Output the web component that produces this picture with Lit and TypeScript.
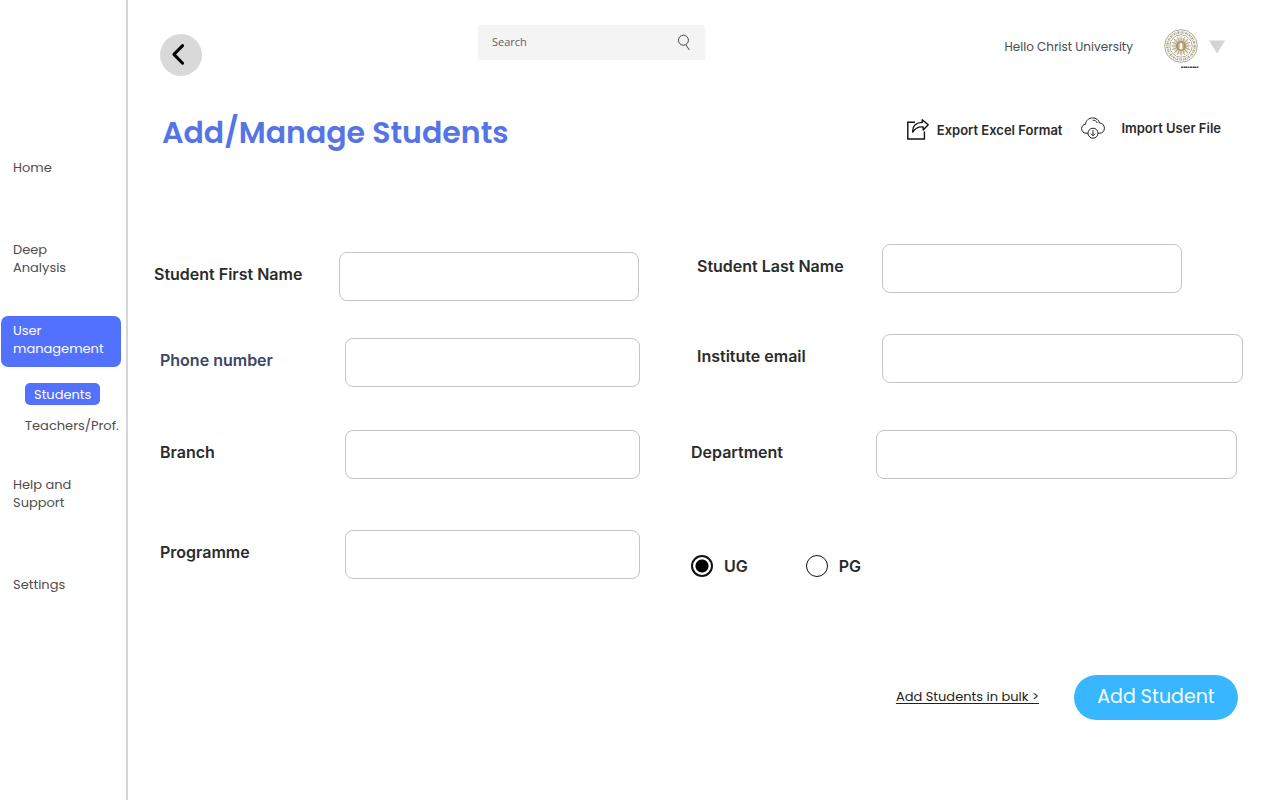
import { LitElement, html, css, svg } from "lit";
import { customElement, state } from "lit/decorators.js";

const RAYS = Array.from({ length: 16 }, (_, i) => i * 22.5);

@customElement("university-seal")
class UniversitySeal extends LitElement {
  static styles = css`
    :host { display: block; width: 36px; height: 40px; }
    svg { display: block; }
  `;
  render() {
    return html`
      <svg width="36" height="40" viewBox="0 0 36 40" fill="none" role="img" aria-label="University seal">
        <circle cx="17" cy="17" r="16.3" stroke="#a59c85" stroke-width="0.9" />
        <circle cx="17" cy="17" r="13.6" stroke="#b5aa8e" stroke-width="2.4" stroke-dasharray="1.7 0.6 0.8 0.9" />
        <circle cx="17" cy="17" r="11.2" stroke="#a3977a" stroke-width="0.8" />
        <circle cx="17" cy="17" r="8.4" fill="#e9e1cd" />
        ${RAYS.map((a) => svg`<path d="M17 13V7.4" stroke="#b8a785" stroke-width="1" transform="rotate(${a} 17 17)" />`)}
        <circle cx="17" cy="17" r="5" fill="#a8946a" />
        <circle cx="17" cy="17" r="3.4" fill="#c0ab80" />
        <path d="M17 13.4c1.6 1.6 1.7 2.6 1.1 3.7l.5 3.2h-3.2l.5-3.2c-.6-1.1-.5-2.1 1.1-3.7z" fill="#fffdf4" />
        <path d="M17 38.2H35" stroke="#4a4a4a" stroke-width="1.4" stroke-dasharray="2.6 0.4 3.4 0.4 1.6 0.5" />
      </svg>
    `;
  }
}

@customElement("app-root")
class AppRoot extends LitElement {
  @state() level = "UG";

  static styles = css`
    :host {
      display: block;
      font-family: Poppins, Inter, "Open Sans", sans-serif;
      color: #2b2b2b;
      background: #fff;
    }
    * { box-sizing: border-box; }
    a { color: inherit; text-decoration: none; }
    button { font: inherit; border: 0; padding: 0; background: none; cursor: pointer; color: inherit; }
    svg { display: block; }

    .shell { display: flex; min-height: 100vh; }

    .sidebar {
      flex: 0 0 128px;
      border-right: 2px solid #d6d6d6;
      padding: 159px 5px 24px 1px;
      font-size: 13px;
      line-height: 18px;
      color: #4d4d4d;
    }
    .menu, .submenu { list-style: none; margin: 0; padding: 0; }
    .menu { display: flex; flex-direction: column; gap: 64px; }
    .item { display: block; padding: 0 12px; }
    .group { margin-top: -25px; }
    .item.active {
      background: #5271ff;
      color: #fff;
      border-radius: 7px;
      padding: 6px 12px 9px;
    }
    .submenu {
      display: flex;
      flex-direction: column;
      align-items: flex-start;
      gap: 12px;
      padding: 16px 0 0 24px;
      margin-bottom: -23px;
    }
    .sub { display: block; white-space: nowrap; }
    .sub.active {
      background: #5271ff;
      color: #fff;
      border-radius: 5px;
      padding: 3px 9px 1px;
    }

    .main { flex: 1; min-width: 0; }

    .topbar {
      display: grid;
      grid-template-columns: 318fr 227px 520fr;
      align-items: start;
      padding: 25px 55px 0 32px;
    }
    .back {
      width: 42px;
      height: 42px;
      margin-top: 9px;
      border-radius: 50%;
      background: #d9d9d9;
    }
    .search {
      display: flex;
      align-items: center;
      height: 35px;
      padding: 0 14px;
      border-radius: 2px;
      background: #f4f4f4;
    }
    .search input {
      flex: 1;
      min-width: 0;
      border: 0;
      padding: 0 0 2px;
      outline: 0;
      background: none;
      font: 11px/16px "Open Sans", sans-serif;
      color: #555;
    }
    .search input::placeholder { color: #606060; opacity: 1; }
    .account {
      display: flex;
      justify-content: flex-end;
      align-items: center;
      height: 43px;
      font-size: 12px;
      line-height: 18px;
      color: #4d4d4d;
    }
    .account university-seal { margin: 4px 9px 0 31px; }

    .heading {
      display: flex;
      justify-content: space-between;
      align-items: flex-start;
      padding: 35px 59px 0 34px;
    }
    h1 {
      margin: 0;
      font-size: 30px;
      line-height: 44px;
      font-weight: 600;
      color: #5674e6;
    }
    .actions {
      display: flex;
      align-items: flex-start;
      padding-top: 6px;
      font-family: Inter, sans-serif;
      font-size: 13px;
      line-height: 20px;
      font-weight: 600;
    }
    .action { display: flex; align-items: center; gap: 8px; }
    .action.export { margin: 2px 19px 0 0; }
    .action.import { gap: 16px; }

    .form {
      display: grid;
      grid-template-columns: 486fr 552fr;
      column-gap: 51px;
      padding: 89px 37px 0 26px;
      font-family: Inter, sans-serif;
      font-size: 16px;
      line-height: 20px;
      font-weight: 600;
    }
    .column { display: grid; align-items: start; align-content: start; }
    .column.left { grid-template-rows: 86px 92px 100px 49px; padding-top: 8px; }
    .column.right { grid-template-rows: 90px 96px 125px auto; }
    .field { display: flex; align-items: center; }
    .field.inset { padding-left: 6px; }
    .field label { flex: 0 0 185px; padding-bottom: 6px; }
    .field input {
      flex: 1;
      min-width: 0;
      height: 49px;
      border: 1px solid #c4c4c4;
      border-radius: 8px;
      padding: 0 12px;
      background: #fff;
      font: inherit;
      font-weight: 400;
    }
    .right .field input { max-width: 361px; }
    .field.short input, .right .field.short input { max-width: 300px; }
    .field.accent label { color: #3b4668; }

    .levels { display: flex; gap: 58px; margin: 0; padding: 0; border: 0; }
    .level { display: flex; align-items: center; gap: 11px; }
    .level input {
      appearance: none;
      width: 22px;
      height: 22px;
      margin: 0;
      border: 1px solid #111;
      border-radius: 50%;
      background: #fff;
    }
    .level input:checked {
      border-width: 2px;
      background: radial-gradient(circle, #000 0 6px, #fff 7px);
    }

    .footer {
      display: flex;
      justify-content: flex-end;
      align-items: center;
      gap: 35px;
      padding: 96px 42px 40px 32px;
    }
    .bulk { font-size: 13px; line-height: 18px; padding-bottom: 2px; text-decoration: underline; text-underline-offset: 2px; color: #222; }
    .submit {
      width: 164px;
      height: 45px;
      padding-bottom: 2px;
      border-radius: 23px;
      background: #38b6ff;
      color: #f2fdff;
      font-size: 19px;
      line-height: 26px;
    }
  `;

  private field(id: string, label: string, cls = "") {
    return html`
      <div class="field ${cls}">
        <label for=${id}>${label}</label>
        <input id=${id} name=${id} type=${id === "email" ? "email" : "text"} />
      </div>
    `;
  }

  private radio(value: string) {
    return html`
      <label class="level">
        <input type="radio" name="level" .value=${value} .checked=${this.level === value}
          @change=${() => (this.level = value)} />
        ${value}
      </label>
    `;
  }

  render() {
    return html`
      <div class="shell">
        <nav class="sidebar" aria-label="Main">
          <ul class="menu">
            <li><a class="item" href="#home">Home</a></li>
            <li><a class="item" href="#analysis">Deep<br />Analysis</a></li>
            <li class="group">
              <a class="item active" href="#users">User<br />management</a>
              <ul class="submenu">
                <li><a class="sub active" href="#students" aria-current="page">Students</a></li>
                <li><a class="sub" href="#teachers">Teachers/Prof.</a></li>
              </ul>
            </li>
            <li><a class="item" href="#help">Help and<br />Support</a></li>
            <li><a class="item" href="#settings">Settings</a></li>
          </ul>
        </nav>

        <main class="main">
          <header class="topbar">
            <button class="back" type="button" aria-label="Back">
              <svg width="42" height="42" viewBox="0 0 42 42" fill="none" stroke="#000" stroke-width="3" stroke-linecap="round" stroke-linejoin="round">
                <path d="M22.6 11.6L13.9 20.4L22.6 29.2" />
              </svg>
            </button>
            <div class="search" role="search">
              <input type="search" aria-label="Search" placeholder="Search" />
              <svg width="14" height="17" viewBox="0 0 14 17" fill="none" stroke="#444" stroke-width="1">
                <circle cx="6.4" cy="6.2" r="5" />
                <path d="M8.8 10.6L12.2 15.8" />
              </svg>
            </div>
            <div class="account">
              <span>Hello Christ University</span>
              <university-seal></university-seal>
              <button type="button" aria-label="Account menu">
                <svg width="16" height="14" viewBox="0 0 16 14"><path d="M0 0.5H16L8 13.5Z" fill="#d4d4d4" /></svg>
              </button>
            </div>
          </header>

          <div class="heading">
            <h1>Add/Manage Students</h1>
            <div class="actions">
              <button class="action export" type="button">
                <svg width="22" height="22" viewBox="0 0 22 22" fill="none" stroke="#111" stroke-width="1.4">
                  <path d="M8 3.2H0.8V20H17.4V12.5" />
                  <path d="M5.8 13.2C5.2 6.6 9.4 3.4 15.2 3.4V0.8L21.2 5.8L16.2 11V8C11.4 7.4 8.4 8.8 5.8 13.2Z" stroke-linejoin="round" />
                </svg>
                Export Excel Format
              </button>
              <button class="action import" type="button">
                <svg width="24" height="22" viewBox="0 0 24 22" fill="none" stroke="#222" stroke-width="1">
                  <path d="M7 16.2H5C2.4 16 0.6 14 0.6 11.6C0.6 9.2 2.4 7.4 4.6 7.2C4.6 3.6 7.8 0.9 11.6 0.9C15 0.9 17.8 2.8 18.6 6C21.6 6.2 23.4 8.4 23.4 11.2C23.4 14 21.6 16.2 18.8 16.2H17" />
                  <path d="M11.8 3.2C13.8 3 15.6 4.2 16.4 6.2" />
                  <circle cx="12" cy="16.2" r="5" />
                  <path d="M12 13.2V18.6M9.8 16.6L12 18.8L14.2 16.6" />
                </svg>
                Import User File
              </button>
            </div>
          </div>

          <form @submit=${(e: Event) => e.preventDefault()}>
            <div class="form">
              <div class="column left">
                ${this.field("first-name", "Student First Name", "short")}
                ${this.field("phone", "Phone number", "inset accent")}
                ${this.field("branch", "Branch", "inset")}
                ${this.field("programme", "Programme", "inset")}
              </div>
              <div class="column right">
                ${this.field("last-name", "Student Last Name", "inset short")}
                ${this.field("email", "Institute email", "inset")}
                ${this.field("department", "Department")}
                <div class="levels" role="radiogroup" aria-label="Level">
                  ${this.radio("UG")} ${this.radio("PG")}
                </div>
              </div>
            </div>
            <div class="footer">
              <a class="bulk" href="#bulk">Add Students in bulk &gt;</a>
              <button class="submit" type="submit">Add Student</button>
            </div>
          </form>
        </main>
      </div>
    `;
  }
}
